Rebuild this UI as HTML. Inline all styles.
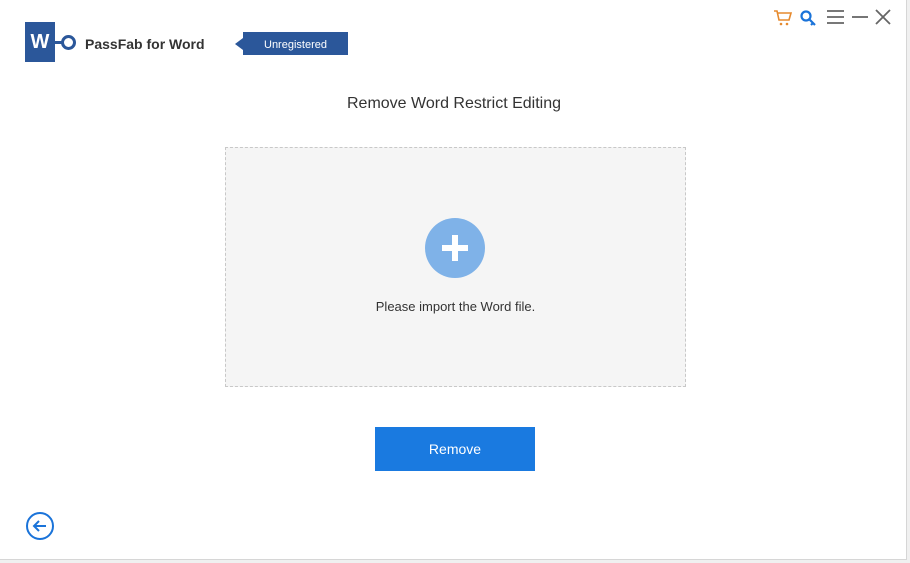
<!DOCTYPE html><html><head><style>
body{margin:0;width:910px;height:563px;background:#f0f0f0;font-family:"Liberation Sans",sans-serif;position:relative;overflow:hidden}
.win{position:absolute;left:0;top:0;width:906px;height:559px;background:#fff;border-right:1px solid #d6d6d6;border-bottom:1px solid #d6d6d6}
.a{position:absolute}
</style></head><body><div class="win">
<div class="a" style="left:25px;top:22px;width:30px;height:40px;background:#2b579a;color:#fff;font-weight:bold;font-size:20px;line-height:40px;text-align:center">W</div>
<div class="a" style="left:55px;top:41px;width:7px;height:3px;background:#2b579a"></div>
<div class="a" style="left:61px;top:35px;width:9px;height:9px;border:3px solid #2b579a;border-radius:50%"></div>
<div class="a" style="left:85px;top:36px;font-size:14px;font-weight:bold;color:#333">PassFab for Word</div>
<div class="a" style="left:235px;top:38px;width:0;height:0;border-top:6px solid transparent;border-bottom:6px solid transparent;border-right:8px solid #2b579a"></div>
<div class="a" style="left:243px;top:32px;width:105px;height:23px;background:#2b579a;color:#fff;font-size:11px;line-height:26px;text-align:center">Unregistered</div>
<svg class="a" style="left:770px;top:6px" width="130" height="24">
<g fill="none" stroke="#e68a2e" stroke-width="1.6"><path d="M4 5h3l2 9h10l2-7H8"/></g><circle cx="11" cy="18" r="1.3" fill="#e68a2e"/><circle cx="17" cy="18" r="1.3" fill="#e68a2e"/>
<g fill="none" stroke="#1a73d9" stroke-width="2.2"><circle cx="36" cy="10" r="4.5"/><path d="M39 13l6 6M43 17l-2 2"/></g>
<g stroke="#666" stroke-width="1.8"><path d="M57 5h17M57 11h17M57 17h17"/><path d="M82 11h16"/><path d="M106 4l14 14M120 4l-14 14"/></g>
</svg>
<div class="a" style="left:0;top:95px;width:908px;text-align:center;font-size:16px;color:#333">Remove Word Restrict Editing</div>
<div class="a" style="left:225px;top:147px;width:459px;height:238px;background:#f5f5f5;border:1px dashed #c8c8c8"></div>
<div class="a" style="left:425px;top:218px;width:60px;height:60px;border-radius:50%;background:#7fb2e8"></div>
<div class="a" style="left:442px;top:245px;width:26px;height:6px;background:#fff"></div>
<div class="a" style="left:452px;top:235px;width:6px;height:26px;background:#fff"></div>
<div class="a" style="left:225px;top:299px;width:461px;text-align:center;font-size:13px;color:#333">Please import the Word file.</div>
<div class="a" style="left:375px;top:427px;width:160px;height:44px;background:#1a7ae0;color:#fff;font-size:14px;line-height:44px;text-align:center">Remove</div>
<svg class="a" style="left:25px;top:512px" width="30" height="30"><circle cx="15" cy="14" r="13" fill="none" stroke="#1a73d9" stroke-width="2"/><path d="M21 14H9M14 9l-5 5 5 5" fill="none" stroke="#1a73d9" stroke-width="2"/></svg>
</div></body></html>
